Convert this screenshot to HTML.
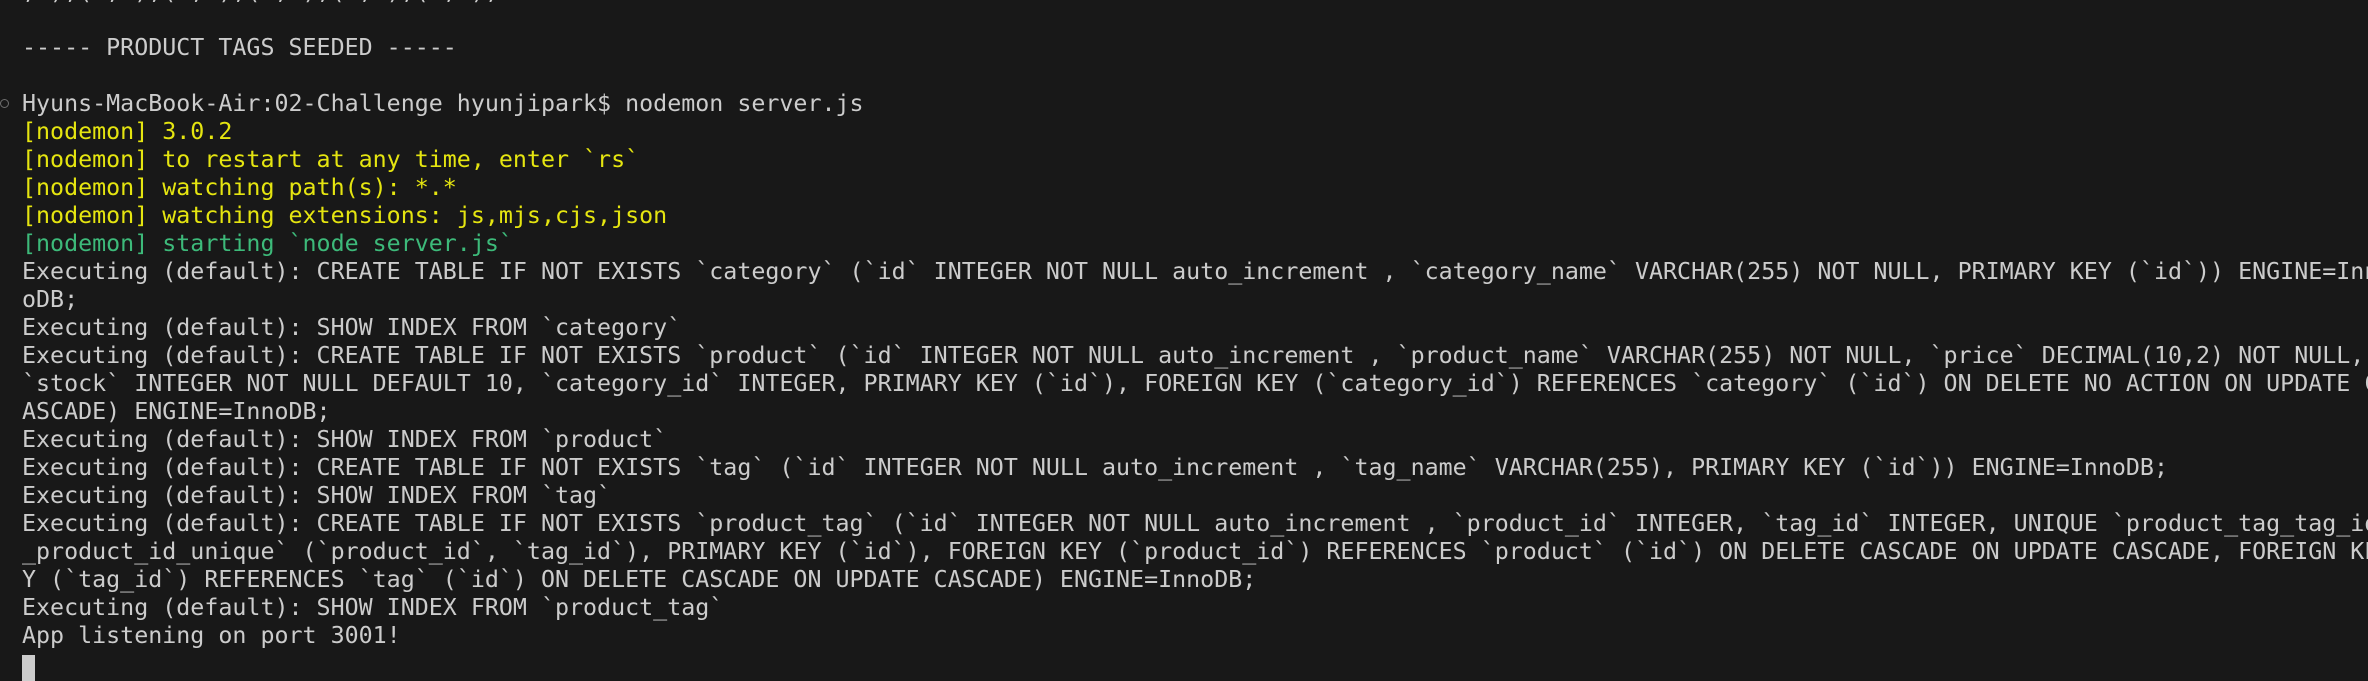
<!DOCTYPE html>
<html><head><meta charset="utf-8"><style>
html,body{margin:0;padding:0;background:#181818;width:2368px;height:668px;overflow:hidden}
pre{position:absolute;left:22px;top:-22px;margin:0;font-family:"DejaVu Sans Mono","Liberation Mono",monospace;font-size:23.3px;line-height:28px;color:#cccccc;white-space:pre}
.y{color:#e5e510}.g{color:#3dba7a}
.cur{display:inline-block;width:13px;height:26px;background:#cccccc;vertical-align:-10px}
.dot{position:absolute;left:0;top:99px;width:7px;height:7px;border:1.5px solid #6e6e6e;border-radius:50%}
</style></head><body>
<div class="dot"></div>
<pre>,2),(3,4),(4,1),(4,3),(5,1),(5,4);

----- PRODUCT TAGS SEEDED -----

Hyuns-MacBook-Air:02-Challenge hyunjipark$ nodemon server.js
<span class="y">[nodemon] 3.0.2</span>
<span class="y">[nodemon] to restart at any time, enter `rs`</span>
<span class="y">[nodemon] watching path(s): *.*</span>
<span class="y">[nodemon] watching extensions: js,mjs,cjs,json</span>
<span class="g">[nodemon] starting `node server.js`</span>
Executing (default): CREATE TABLE IF NOT EXISTS `category` (`id` INTEGER NOT NULL auto_increment , `category_name` VARCHAR(255) NOT NULL, PRIMARY KEY (`id`)) ENGINE=Inn
oDB;
Executing (default): SHOW INDEX FROM `category`
Executing (default): CREATE TABLE IF NOT EXISTS `product` (`id` INTEGER NOT NULL auto_increment , `product_name` VARCHAR(255) NOT NULL, `price` DECIMAL(10,2) NOT NULL, 
`stock` INTEGER NOT NULL DEFAULT 10, `category_id` INTEGER, PRIMARY KEY (`id`), FOREIGN KEY (`category_id`) REFERENCES `category` (`id`) ON DELETE NO ACTION ON UPDATE C
ASCADE) ENGINE=InnoDB;
Executing (default): SHOW INDEX FROM `product`
Executing (default): CREATE TABLE IF NOT EXISTS `tag` (`id` INTEGER NOT NULL auto_increment , `tag_name` VARCHAR(255), PRIMARY KEY (`id`)) ENGINE=InnoDB;
Executing (default): SHOW INDEX FROM `tag`
Executing (default): CREATE TABLE IF NOT EXISTS `product_tag` (`id` INTEGER NOT NULL auto_increment , `product_id` INTEGER, `tag_id` INTEGER, UNIQUE `product_tag_tag_id
_product_id_unique` (`product_id`, `tag_id`), PRIMARY KEY (`id`), FOREIGN KEY (`product_id`) REFERENCES `product` (`id`) ON DELETE CASCADE ON UPDATE CASCADE, FOREIGN KE
Y (`tag_id`) REFERENCES `tag` (`id`) ON DELETE CASCADE ON UPDATE CASCADE) ENGINE=InnoDB;
Executing (default): SHOW INDEX FROM `product_tag`
App listening on port 3001!
<span class="cur"></span></pre>
</body></html>
